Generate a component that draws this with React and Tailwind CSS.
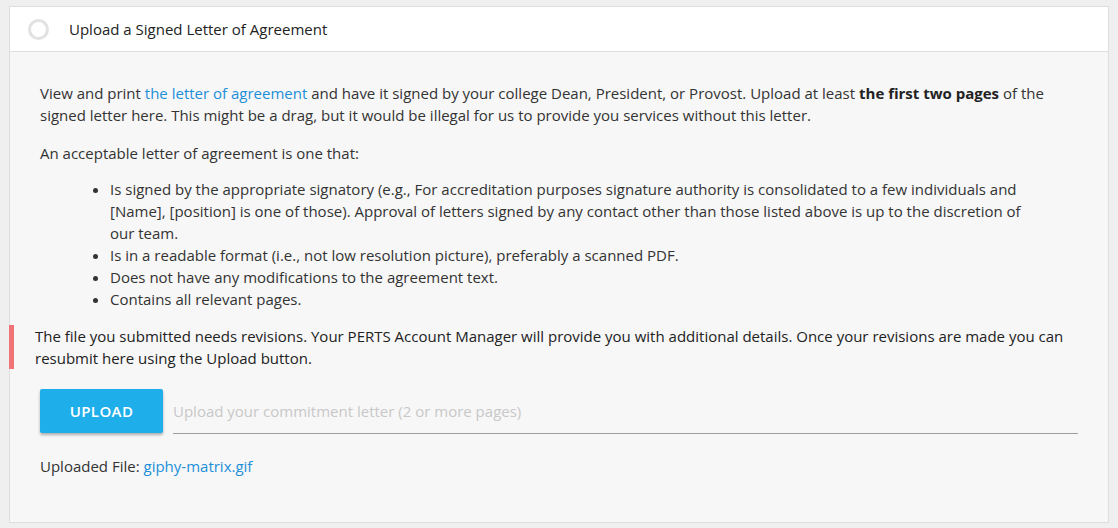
import React from "react";

const linkColor = "text-[#1c8fd9]";

const App = () => {
  return (
    <div className="min-h-screen bg-[#efefef] pt-[6px] px-[9px] pb-[5px] font-['Open_Sans',sans-serif] text-[15px] leading-[22px] text-[#333]">
      <div className="w-[1100px] border border-[#dedede]">
        {/* Header */}
        <div className="h-[45px] bg-white flex items-center border-b border-[#dedede]">
          <div className="ml-[18px] w-[21px] h-[21px] rounded-full border-[3px] border-[#e2e2e2]" />
          <span className="ml-[20px] -mt-[1px] text-[#222]">Upload a Signed Letter of Agreement</span>
        </div>

        {/* Body */}
        <div className="bg-[#f7f7f7] pl-[30px] pr-[30px] pt-[30px] pb-[45px]">
          <p>
            View and print{" "}
            <a href="#" className={linkColor}>
              the letter of agreement
            </a>{" "}
            and have it signed by your college Dean, President, or Provost. Upload at least{" "}
            <strong className="font-bold text-[#222]">the first two pages</strong> of the signed letter here. This might
            be a drag, but it would be illegal for us to provide you services without this letter.
          </p>
          <p className="mt-[16px]">An acceptable letter of agreement is one that:</p>
          <ul className="mt-[14px] ml-[70px] mr-[44px] list-disc">
            <li>
              Is signed by the appropriate signatory (e.g., For accreditation purposes signature authority is
              consolidated to a few individuals and [Name], [position] is one of those). Approval of letters signed by
              any contact other than those listed above is up to the discretion of our team.
            </li>
            <li>Is in a readable format (i.e., not low resolution picture), preferably a scanned PDF.</li>
            <li>Does not have any modifications to the agreement text.</li>
            <li>Contains all relevant pages.</li>
          </ul>

          {/* Revision alert */}
          <div className="mt-[15px] -ml-[31px] border-l-[5px] border-[#f07376] pl-[21px] text-[#222]">
            The file you submitted needs revisions. Your PERTS Account Manager will provide you with additional
            details. Once your revisions are made you can resubmit here using the Upload button.
          </div>

          {/* Upload row */}
          <div className="mt-[20px] flex items-stretch">
            <button className="w-[123px] h-[44px] rounded-[2px] bg-[#1eaeea] text-white font-semibold text-[15px] tracking-[0.4px] shadow-[0_2px_3px_rgba(0,0,0,0.3)]">
              UPLOAD
            </button>
            <div className="ml-[10px] flex-1 border-b border-[#9e9e9e] flex items-center h-[45px]">
              <span className="text-[#c8c8c8] text-[15px]">Upload your commitment letter (2 or more pages)</span>
            </div>
          </div>

          <p className="mt-[21px]">
            Uploaded File:{" "}
            <a href="#" className={linkColor}>
              giphy-matrix.gif
            </a>
          </p>
        </div>
      </div>
    </div>
  );
};

export default App;
